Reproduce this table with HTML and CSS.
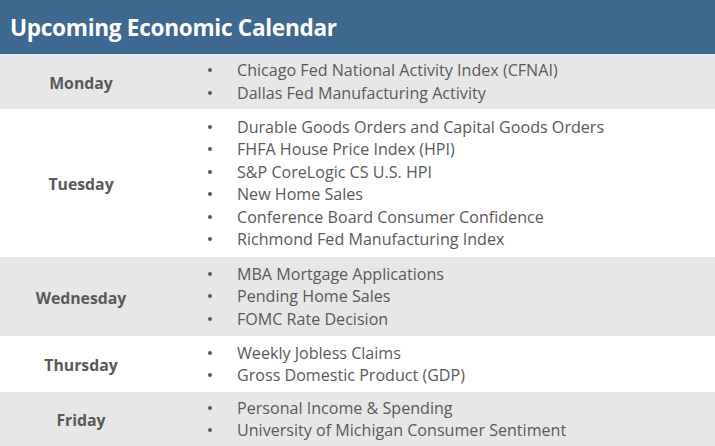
FILE: index.html
```html
<!DOCTYPE html>
<html>
<head>
<meta charset="utf-8">
<link rel="stylesheet" href="styles.css">
</head>
<body>
<div class="cal">
  <div class="header"><h1 class="title">Upcoming Economic Calendar</h1></div>
  <div class="row gray r-mon">
    <div class="day">Monday</div>
    <ul class="items">
      <li>Chicago Fed National Activity Index (CFNAI)</li>
      <li>Dallas Fed Manufacturing Activity</li>
    </ul>
  </div>
  <div class="row r-tue">
    <div class="day">Tuesday</div>
    <ul class="items">
      <li>Durable Goods Orders and Capital Goods Orders</li>
      <li>FHFA House Price Index (HPI)</li>
      <li>S&amp;P CoreLogic CS U.S. HPI</li>
      <li>New Home Sales</li>
      <li>Conference Board Consumer Confidence</li>
      <li>Richmond Fed Manufacturing Index</li>
    </ul>
  </div>
  <div class="row gray r-wed">
    <div class="day">Wednesday</div>
    <ul class="items">
      <li>MBA Mortgage Applications</li>
      <li>Pending Home Sales</li>
      <li>FOMC Rate Decision</li>
    </ul>
  </div>
  <div class="row r-thu">
    <div class="day">Thursday</div>
    <ul class="items">
      <li>Weekly Jobless Claims</li>
      <li>Gross Domestic Product (GDP)</li>
    </ul>
  </div>
  <div class="row gray r-fri">
    <div class="day">Friday</div>
    <ul class="items">
      <li>Personal Income &amp; Spending</li>
      <li>University of Michigan Consumer Sentiment</li>
    </ul>
  </div>
</div>
</body>
</html>
```
FILE: styles.css
```css
html, body {
  margin: 0;
  padding: 0;
  background: #ffffff;
}
body {
  font-family: "Open Sans", "Liberation Sans", sans-serif;
  color: #595959;
}
.cal {
  width: 715px;
  display: flex;
  flex-direction: column;
}
.header {
  height: 54px;
  background: #3d6890;
  display: flex;
  align-items: center;
  padding-left: 10px;
}
.title {
  margin: 0;
  color: #ffffff;
  font-size: 22.6px;
  font-weight: 700;
  letter-spacing: -0.3px;
}
.row {
  display: grid;
  grid-template-columns: 162px 1fr;
  align-items: center;
}
.gray {
  background: #e7e7e7;
}
.r-mon { height: 55px; }
.r-tue { height: 148px; }
.r-wed { height: 79px; }
.r-thu { height: 56px; }
.r-fri { height: 54px; }
.day {
  text-align: center;
  font-weight: 700;
  font-size: 15.8px;
  padding-top: 2px;
}
.items {
  list-style: none;
  margin: 0;
  padding: 0;
}
.items li {
  position: relative;
  padding-left: 75px;
  font-size: 16.1px;
  line-height: 22.5px;
}
.items li::before {
  content: "";
  position: absolute;
  left: 46px;
  top: 9px;
  width: 4px;
  height: 4px;
  border-radius: 50%;
  background: #595959;
}
```
